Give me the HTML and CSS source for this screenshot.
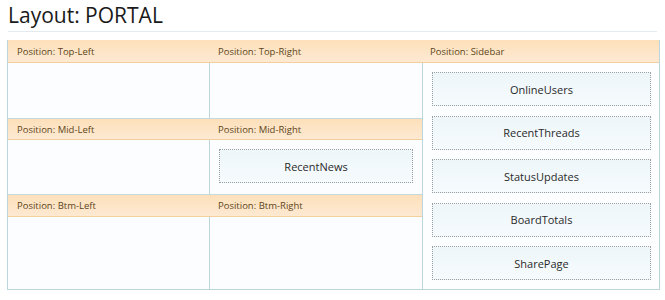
FILE: index.html
```html
<!DOCTYPE html>
<html>
<head>
  <meta charset="UTF-8">
  <title>Layout: PORTAL</title>
  <link rel="stylesheet" href="styles.css">
</head>
<body>
  <h1 class="title">Layout: PORTAL</h1>
  <div class="layout">
    <div class="pos-head">Position: Top-Left</div>
    <div class="pos-head">Position: Top-Right</div>
    <div class="pos-head side-head">Position: Sidebar</div>

    <div class="pos-body left row1"></div>
    <div class="pos-body row1"></div>

    <div class="sidebar">
      <div class="module">OnlineUsers</div>
      <div class="module">RecentThreads</div>
      <div class="module">StatusUpdates</div>
      <div class="module">BoardTotals</div>
      <div class="module">SharePage</div>
    </div>

    <div class="pos-head split">Position: Mid-Left</div>
    <div class="pos-head split">Position: Mid-Right</div>

    <div class="pos-body left row2"></div>
    <div class="pos-body row2">
      <div class="module">RecentNews</div>
    </div>

    <div class="pos-head split">Position: Btm-Left</div>
    <div class="pos-head split">Position: Btm-Right</div>

    <div class="pos-body left row3"></div>
    <div class="pos-body row3"></div>
  </div>
</body>
</html>
```

FILE: styles.css
```css
body {
  margin: 0;
  background-color: #ffffff;
  font-family: 'Open Sans', sans-serif;
  color: #222;
}
.title {
  margin: 0 8px;
  padding: 3px 0 4px 0;
  font-size: 21px;
  font-weight: normal;
  line-height: 24px;
  color: #1a1a1a;
  border-bottom: 1px solid #e4eaee;
}
.layout {
  display: grid;
  grid-template-columns: 202px 212px 237px;
  grid-template-rows: 23px 55px 22px 54px 23px 72px;
  margin: 8px 0 0 7px;
  width: 651px;
  border: 1px solid #bcd6dd;
  border-top: none;
}
.pos-head {
  display: flex;
  align-items: center;
  padding-left: 9px;
  font-size: 9.5px;
  color: #5e4520;
  background: linear-gradient(#fde0ba, #fde9d2);
  border-bottom: 1px solid #f3cf9f;
  box-sizing: border-box;
}
.pos-head + .pos-head {
  padding-left: 8px;
}
.side-head {
  padding-left: 8px;
}
.split {
  border-top: 1px solid #c3d9de;
}
.pos-body {
  background-color: #fcfdff;
}
.pos-body.left {
  border-right: 1px solid #bcd6dd;
}
.row1 { grid-row: 2; }
.row2 { grid-row: 4; }
.row3 { grid-row: 6; }
.row2:not(.left) {
  padding: 9px 9px 0 9px;
}
.sidebar {
  grid-column: 3;
  grid-row: 2 / 7;
  display: flex;
  flex-direction: column;
  gap: 9.5px;
  padding: 9px 8px 0 9px;
  border-left: 1px solid #bcd6dd;
  background-color: #fdfeff;
}
.module {
  display: flex;
  align-items: center;
  justify-content: center;
  height: 34px;
  box-sizing: border-box;
  font-size: 11px;
  color: #2a2a2a;
  background: linear-gradient(#eef6fa, #f6fbfd);
  border: 1px dotted #9a9fa3;
}
```
